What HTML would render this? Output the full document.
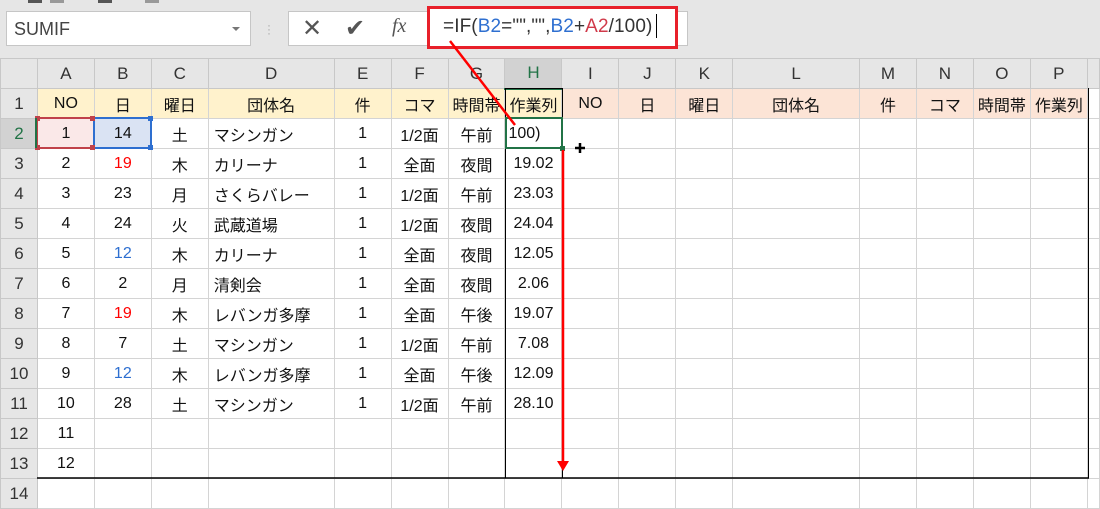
<!DOCTYPE html>
<html><head><meta charset="utf-8"><style>
*{margin:0;padding:0;box-sizing:border-box}
body{width:1100px;height:493px;overflow:hidden;background:#e6e6e6;font-family:"Liberation Sans","Noto Sans CJK JP",sans-serif;position:relative}
.abs{position:absolute}
table{position:absolute;left:0;top:58px;border-collapse:collapse;table-layout:fixed;background:#fff}
td{height:30px;border:1px solid #d4d4d4;font-size:16px;text-align:center;white-space:nowrap;overflow:hidden;padding:0;color:#111}
tr.h td{background:#e6e6e6;color:#333;border-color:#c8c8c8;font-size:17px}
td.rh{background:#e6e6e6;color:#333;border-color:#c8c8c8;font-size:17px}
td.l{text-align:left;padding-left:5px}
.y{background:#fff2cc}
.o{background:#fce4d6}
.r{color:#f00}.b{color:#2e6fd0}
</style></head><body>
<div class="abs" style="left:28px;top:0;width:14px;height:3px;background:#555"></div>
<div class="abs" style="left:50px;top:0;width:14px;height:3px;background:#999"></div>
<div class="abs" style="left:98px;top:0;width:14px;height:3px;background:#555"></div>
<div class="abs" style="left:145px;top:0;width:14px;height:3px;background:#999"></div>
<div class="abs" style="left:6px;top:11px;width:245px;height:35px;background:#fff;border:1px solid #c6c6c6;font-size:18px;color:#444;padding:7px 0 0 7px">SUMIF<span style="position:absolute;right:10px;top:15px;border-left:4px solid transparent;border-right:4px solid transparent;border-top:4px solid #777"></span></div>
<div class="abs" style="left:267px;top:23px;color:#aaa;font-size:12px;line-height:4px">·<br>·<br>·</div>
<div class="abs" style="left:288px;top:11px;width:400px;height:35px;background:#fff;border:1px solid #c6c6c6"></div>
<div class="abs" style="left:302px;top:14px;font-size:24px;color:#555">✕</div>
<div class="abs" style="left:345px;top:14px;font-size:24px;color:#555">✔</div>
<div class="abs" style="left:392px;top:15px;font-size:20px;color:#555;font-family:'Liberation Serif',serif;font-style:italic">fx</div>
<div class="abs" style="left:427px;top:6px;width:251px;height:43px;border:3px solid #e8202a;background:#fff"></div>
<div class="abs" style="left:443px;top:16px;font-size:19px;color:#333;letter-spacing:0.1px">=IF(<span class="b">B2</span>="","",<span class="b">B2</span>+<span style="color:#d03a4a">A2</span>/100)</div>
<div class="abs" style="left:656px;top:14px;width:1px;height:24px;background:#000"></div>
<table>
<colgroup><col style="width:37px"><col style="width:57px"><col style="width:57px"><col style="width:57px"><col style="width:126px"><col style="width:57px"><col style="width:57px"><col style="width:57px"><col style="width:57px"><col style="width:57px"><col style="width:57px"><col style="width:57px"><col style="width:127px"><col style="width:57px"><col style="width:57px"><col style="width:57px"><col style="width:57px"><col style="width:12px"></colgroup>
<tr class="h"><td></td><td>A</td><td>B</td><td>C</td><td>D</td><td>E</td><td>F</td><td>G</td><td style="background:#d2d2d2;color:#217346;border-bottom:2px solid #217346">H</td><td>I</td><td>J</td><td>K</td><td>L</td><td>M</td><td>N</td><td>O</td><td>P</td><td></td></tr>
<tr style="border-bottom:1px solid #000"><td class="rh">1</td><td class="y">NO</td><td class="y">日</td><td class="y">曜日</td><td class="y">団体名</td><td class="y">件</td><td class="y">コマ</td><td class="y">時間帯</td><td class="y">作業列</td><td class="o">NO</td><td class="o">日</td><td class="o">曜日</td><td class="o">団体名</td><td class="o">件</td><td class="o">コマ</td><td class="o">時間帯</td><td class="o">作業列</td><td></td></tr>
<tr><td class="rh" style="background:#d2d2d2;color:#217346">2</td><td style="background:#fae8e8">1</td><td style="background:#dae3f3">14</td><td>土</td><td class="l">マシンガン</td><td>1</td><td>1/2面</td><td>午前</td><td class="l" style="padding-left:3px">100)</td><td></td><td></td><td></td><td></td><td></td><td></td><td></td><td></td><td></td></tr>
<tr><td class="rh">3</td><td>2</td><td class="r">19</td><td>木</td><td class="l">カリーナ</td><td>1</td><td>全面</td><td>夜間</td><td>19.02</td><td></td><td></td><td></td><td></td><td></td><td></td><td></td><td></td><td></td></tr>
<tr><td class="rh">4</td><td>3</td><td>23</td><td>月</td><td class="l">さくらバレー</td><td>1</td><td>1/2面</td><td>午前</td><td>23.03</td><td></td><td></td><td></td><td></td><td></td><td></td><td></td><td></td><td></td></tr>
<tr><td class="rh">5</td><td>4</td><td>24</td><td>火</td><td class="l">武蔵道場</td><td>1</td><td>1/2面</td><td>夜間</td><td>24.04</td><td></td><td></td><td></td><td></td><td></td><td></td><td></td><td></td><td></td></tr>
<tr><td class="rh">6</td><td>5</td><td class="b">12</td><td>木</td><td class="l">カリーナ</td><td>1</td><td>全面</td><td>夜間</td><td>12.05</td><td></td><td></td><td></td><td></td><td></td><td></td><td></td><td></td><td></td></tr>
<tr><td class="rh">7</td><td>6</td><td>2</td><td>月</td><td class="l">清剣会</td><td>1</td><td>全面</td><td>夜間</td><td>2.06</td><td></td><td></td><td></td><td></td><td></td><td></td><td></td><td></td><td></td></tr>
<tr><td class="rh">8</td><td>7</td><td class="r">19</td><td>木</td><td class="l">レバンガ多摩</td><td>1</td><td>全面</td><td>午後</td><td>19.07</td><td></td><td></td><td></td><td></td><td></td><td></td><td></td><td></td><td></td></tr>
<tr><td class="rh">9</td><td>8</td><td>7</td><td>土</td><td class="l">マシンガン</td><td>1</td><td>1/2面</td><td>午前</td><td>7.08</td><td></td><td></td><td></td><td></td><td></td><td></td><td></td><td></td><td></td></tr>
<tr><td class="rh">10</td><td>9</td><td class="b">12</td><td>木</td><td class="l">レバンガ多摩</td><td>1</td><td>全面</td><td>午後</td><td>12.09</td><td></td><td></td><td></td><td></td><td></td><td></td><td></td><td></td><td></td></tr>
<tr><td class="rh">11</td><td>10</td><td>28</td><td>土</td><td class="l">マシンガン</td><td>1</td><td>1/2面</td><td>午前</td><td>28.10</td><td></td><td></td><td></td><td></td><td></td><td></td><td></td><td></td><td></td></tr>
<tr><td class="rh">12</td><td>11</td><td></td><td></td><td></td><td></td><td></td><td></td><td></td><td></td><td></td><td></td><td></td><td></td><td></td><td></td><td></td><td></td></tr>
<tr><td class="rh">13</td><td>12</td><td></td><td></td><td></td><td></td><td></td><td></td><td></td><td></td><td></td><td></td><td></td><td></td><td></td><td></td><td></td><td></td></tr>
<tr><td class="rh">14</td><td></td><td></td><td></td><td></td><td></td><td></td><td></td><td></td><td></td><td></td><td></td><td></td><td></td><td></td><td></td><td></td><td></td></tr>
</table>
<svg class="abs" style="left:0;top:0" width="1100" height="493">
<line x1="37" y1="478" x2="1089" y2="478" stroke="#000" stroke-width="1.5"/>
<line x1="1088.5" y1="88" x2="1088.5" y2="478" stroke="#000"/>
<line x1="505.5" y1="88" x2="505.5" y2="478" stroke="#000"/>
<line x1="562.5" y1="88" x2="562.5" y2="478" stroke="#000"/>
<line x1="505" y1="88.5" x2="562" y2="88.5" stroke="#000"/>
<rect x="37" y="118" width="57" height="30" fill="none" stroke="#c0424a" stroke-width="2"/>
<rect x="94" y="118" width="57" height="30" fill="none" stroke="#2e6fd0" stroke-width="2"/>
<rect x="35" y="116" width="5" height="5" fill="#c0424a"/><rect x="90" y="116" width="5" height="5" fill="#c0424a"/><rect x="35" y="145" width="5" height="5" fill="#c0424a"/><rect x="90" y="145" width="5" height="5" fill="#c0424a"/>
<rect x="148" y="116" width="5" height="5" fill="#2e6fd0"/><rect x="148" y="145" width="5" height="5" fill="#2e6fd0"/>
<rect x="506" y="118" width="56" height="30" fill="none" stroke="#217346" stroke-width="2"/>
<line x1="36" y1="118" x2="36" y2="148" stroke="#217346" stroke-width="2"/>
<rect x="560" y="146" width="5" height="5" fill="#217346"/>
<line x1="450" y1="41" x2="515" y2="125" stroke="#f00" stroke-width="2.5"/>
<line x1="563" y1="150" x2="563" y2="462" stroke="#f00" stroke-width="2.5"/>
<polygon points="557,461 569,461 563,471" fill="#f00"/>
<path d="M575 148h10M580 143v10" stroke="#000" stroke-width="2.5"/>
</svg>
</body></html>
